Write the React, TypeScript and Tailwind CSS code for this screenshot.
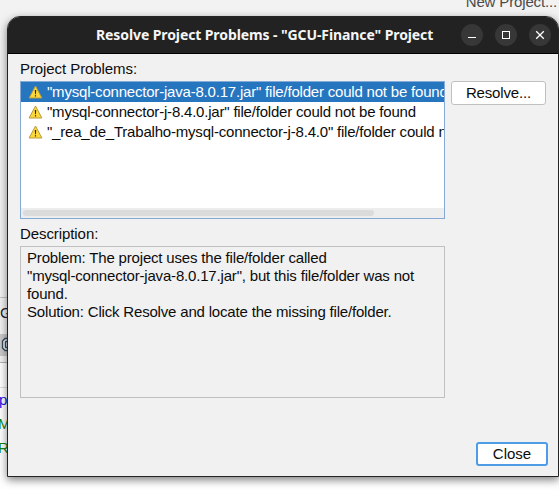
import React from "react";

const problems = [
  '"mysql-connector-java-8.0.17.jar" file/folder could not be found',
  '"mysql-connector-j-8.4.0.jar" file/folder could not be found',
  '"_rea_de_Trabalho-mysql-connector-j-8.4.0" file/folder could not be found',
];

function WarningIcon() {
  return (
    <svg width="15" height="14" viewBox="0 0 15 14" className="shrink-0">
      <path d="M7.5 1 L13.9 13 H1.1 Z" fill="#fbd83a" stroke="#b89b3c" strokeWidth="1" strokeLinejoin="round" />
      <path d="M6.8 5 H8.2 L7.9 9.2 H7.1 Z" fill="#222" />
      <rect x="6.9" y="10.2" width="1.2" height="1.3" fill="#222" />
    </svg>
  );
}

function WindowButton({ children }: { children: React.ReactNode }) {
  return (
    <button className="flex h-[22px] w-[22px] items-center justify-center rounded-full bg-[#373737]">
      <svg width="22" height="22" viewBox="0 0 22 22" fill="none" stroke="#fff" strokeWidth="1">
        {children}
      </svg>
    </button>
  );
}

function Background() {
  return (
    <div className="flex h-full flex-col">
      <div className="flex h-[298px] flex-col items-end overflow-hidden border-b border-[#c4c4c4] bg-[#f2f2f2] pr-[2px] leading-[18px] text-[#4a4a4a]">
        <div className="-mt-[7px] tracking-[-0.15px] whitespace-nowrap">New Project...</div>
      </div>
      <div className="h-[36px] bg-[#f2f2f2] pt-[6px] leading-[18px] text-[#222]">G</div>
      <div className="h-[22px] bg-[#c9c9c9]">
        <svg width="16" height="22" viewBox="0 0 16 22" fill="none" stroke="#34495a">
          <path d="M9 4.5 H5 L2.5 7 V14 L5 16.5 H9" fill="#e9eef2" strokeWidth="1.3" />
          <path d="M9 7.5 H6 L5.5 8 V13 L6 13.5 H9" strokeWidth="1.3" />
        </svg>
      </div>
      <div className="h-[7px] border-b border-[#b5b5b5] bg-[#f2f2f2]" />
      <div className="h-[25px] border-b border-[#ddd] bg-white" />
      <div className="flex-1 bg-white leading-[24px]">
        <div className="-ml-px text-[#1414e6]">p</div>
        <div className="-ml-[2px] text-[#168416]">M</div>
        <div className="-ml-[2px] text-[#168416]">R</div>
      </div>
    </div>
  );
}

export default function App() {
  return (
    <div className="relative h-[495px] w-[559px] overflow-hidden bg-white font-['Liberation_Sans',Arial,sans-serif] text-[15px] text-[#0c0c0c]">
      <Background />
      <div className="absolute top-[16px] left-[7px] flex h-[461px] w-[552px] flex-col overflow-hidden rounded-t-[13px] border border-[#242424] bg-[#f1f1f1] shadow-[0_3px_9px_0px_rgba(0,0,0,0.5)]">
        <header className="flex h-[37px] shrink-0 items-center border-b border-black bg-[#222] pr-[7px]">
          <h1 className="flex-1 pl-[88px] font-['Noto_Sans','Open_Sans',sans-serif] text-[14px] leading-[20px] font-bold tracking-[-0.1px] whitespace-nowrap text-[#f5f5f5]">
            Resolve Project Problems - "GCU-Finance" Project
          </h1>
          <div className="flex gap-[12px]">
            <WindowButton><path d="M7 13.5 H15" /></WindowButton>
            <WindowButton><rect x="7.5" y="7.5" width="7" height="7" /></WindowButton>
            <WindowButton><path d="M7.2 7.2 L14.8 14.8 M14.8 7.2 L7.2 14.8" strokeWidth="1.3" /></WindowButton>
          </div>
        </header>
        <main className="flex flex-1 flex-col pl-[12px]">
          <div className="h-[27px] pt-[6px] leading-[18px] tracking-[-0.08px]">Project Problems:</div>
          <div className="flex gap-[6px]">
            <div className="flex h-[138px] w-[425px] flex-col overflow-hidden border border-[#86aad6] bg-white">
              <div className="flex-1">
                {problems.map((problem, i) => (
                  <div key={problem} className={`flex h-[20px] items-center gap-[4px] pl-[7px] whitespace-nowrap ${i === 0 ? "bg-[#2675bf] text-white" : ""}`}>
                    <WarningIcon />
                    <span className="leading-[18px] tracking-[-0.2px]">{problem}</span>
                  </div>
                ))}
              </div>
              <div className="h-[10px] bg-[#ededed] pt-[2px] pl-[2px]">
                <div className="h-[6px] w-[351px] rounded-full bg-[#dbdbdb]" />
              </div>
            </div>
            <button className="h-[24px] w-[95px] rounded-[3px] border border-[#c0c0c0] bg-white leading-[22px] tracking-[-0.15px]">Resolve...</button>
          </div>
          <div className="h-[27px] pt-[6px] leading-[18px] tracking-[-0.08px]">Description:</div>
          <div className="h-[152px] w-[425px] border border-[#c0c0c0] pt-[2px] pl-[6px] leading-[18px] tracking-[-0.18px]">
            Problem: The project uses the file/folder called
            <br />
            "mysql-connector-java-8.0.17.jar", but this file/folder was not
            <br />
            found.
            <br />
            Solution: Click Resolve and locate the missing file/folder.
          </div>
          <div className="flex justify-end pt-[44px] pr-[10px]">
            <button className="h-[24px] w-[72px] rounded-[3px] border-2 border-[#4e9be6] bg-white leading-[20px]">Close</button>
          </div>
        </main>
      </div>
    </div>
  );
}
